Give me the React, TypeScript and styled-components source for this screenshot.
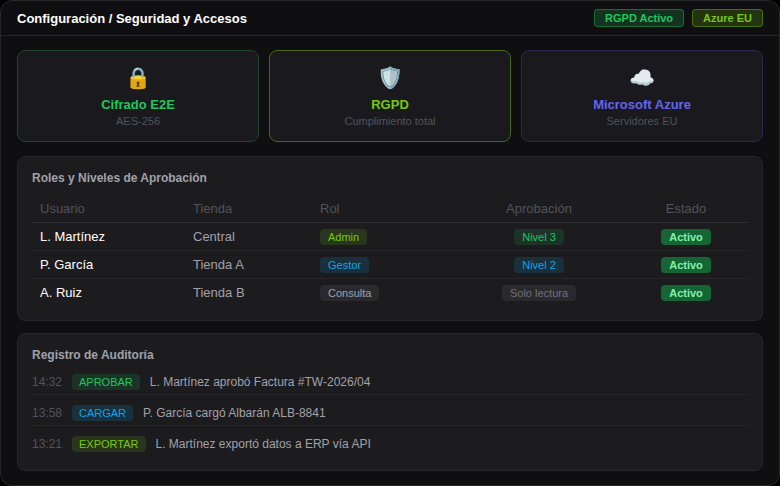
import styled, { createGlobalStyle } from 'styled-components';

const GREEN = '#22c55e';
const LIME = '#76c80e';
const BLUE = '#0ea5e9';
const INDIGO = '#6366f1';

const GlobalStyle = createGlobalStyle`
    html, body {
        margin: 0;
        padding: 0;
        background: #000;
    }
    * {
        box-sizing: border-box;
    }
`;

const Frame = styled.div`
    width: 780px;
    height: 486px;
    background: #0f0f11;
    border: 1px solid #27272a;
    border-radius: 12px;
    overflow: hidden;
    font-family: "Liberation Sans", Arial, sans-serif;
    color: #fff;
`;

const Header = styled.header`
    height: 35px;
    display: flex;
    align-items: center;
    justify-content: space-between;
    padding: 0 16px;
    border-bottom: 1px solid #27272a;
`;

const PageTitle = styled.h1`
    margin: 0;
    font-size: 13px;
    font-weight: 700;
    color: #fff;
`;

const HeaderTags = styled.div`
    display: flex;
    gap: 8px;
`;

const HeaderTag = styled.span<{ $color: string }>`
    height: 18px;
    display: flex;
    align-items: center;
    padding: 0 10px;
    border-radius: 4px;
    font-size: 11px;
    font-weight: 700;
    color: ${p => p.$color};
    background: ${p => p.$color}33;
    border: 1px solid ${p => p.$color}66;
`;

const Content = styled.main`
    display: flex;
    flex-direction: column;
    padding: 14px 16px;
`;

const Cards = styled.section`
    display: grid;
    grid-template-columns: repeat(3, 242px);
    gap: 10px;
    margin-bottom: 14px;
`;

const Card = styled.div<{ $border: string }>`
    height: 92px;
    display: flex;
    flex-direction: column;
    align-items: center;
    background: #1a1a1e;
    border: 1px solid ${p => p.$border};
    border-radius: 8px;
    padding-top: 14px;
`;

const CardIcon = styled.span`
    font-size: 21px;
    line-height: 26px;
    height: 26px;
    margin-bottom: 6px;
    font-family: "Noto Color Emoji", "Liberation Sans", sans-serif;
`;

const CardTitle = styled.div<{ $color: string }>`
    font-size: 13px;
    line-height: 15px;
    font-weight: 700;
    color: ${p => p.$color};
`;

const CardSub = styled.div`
    font-size: 11px;
    line-height: 13px;
    margin-top: 3px;
    color: #52525b;
`;

const Panel = styled.section<{ $height: number; $gap?: number }>`
    height: ${p => p.$height}px;
    margin-bottom: ${p => p.$gap ?? 0}px;
    padding: 14px;
    background: #1c1c1f;
    border: 1px solid #27272a;
    border-radius: 8px;
`;

const PanelTitle = styled.h2`
    margin: 0;
    font-size: 12px;
    line-height: 14px;
    font-weight: 700;
    color: #a1a1aa;
`;

const Table = styled.div`
    margin-top: 10px;
    font-size: 13px;
`;

const Row = styled.div<{ $head?: boolean }>`
    height: 28px;
    display: grid;
    grid-template-columns: 153px 127px 142px 170px 124px;
    align-items: center;
    border-bottom: 1px solid ${p => (p.$head ? '#2e2e33' : '#27272a')};
    &:last-child {
        border-bottom-color: transparent;
    }
`;

const HeadCell = styled.div<{ $center?: boolean }>`
    padding: 0 8px;
    color: #52525b;
    text-align: ${p => (p.$center ? 'center' : 'left')};
`;

const Cell = styled.div<{ $center?: boolean; $strong?: boolean }>`
    padding: 0 8px;
    display: flex;
    justify-content: ${p => (p.$center ? 'center' : 'flex-start')};
    color: ${p => (p.$strong ? '#fff' : '#a1a1aa')};
`;

const Badge = styled.span<{ $color: string; $bg?: string; $bold?: boolean }>`
    height: 16px;
    display: inline-flex;
    align-items: center;
    padding: 0 8px;
    border-radius: 4px;
    font-size: 11px;
    font-weight: ${p => (p.$bold ? 700 : 400)};
    color: ${p => p.$color};
    background: ${p => p.$bg ?? `${p.$color}26`};
`;

const Log = styled.div`
    display: flex;
    flex-direction: column;
    gap: 10px;
    margin-top: 12px;
`;

const LogRow = styled.div`
    display: flex;
    align-items: center;
    padding-bottom: 4px;
    font-size: 12px;
    border-bottom: 1px solid #27272a;
    &:last-child {
        border-bottom: 0;
    }
`;

const LogTime = styled.span`
    width: 40px;
    color: #52525b;
`;

const LogAction = styled(Badge)`
    padding: 0 7px;
    margin-right: 10px;
`;

const LogText = styled.span`
    color: #a1a1aa;
`;

const MUTED_BG = '#2a2a2e';

const users = [
    { name: 'L. Martínez', store: 'Central', role: 'Admin', roleColor: LIME, level: 'Nivel 3', levelColor: GREEN },
    { name: 'P. García', store: 'Tienda A', role: 'Gestor', roleColor: BLUE, level: 'Nivel 2', levelColor: BLUE },
    { name: 'A. Ruiz', store: 'Tienda B', role: 'Consulta', roleColor: '#a1a1aa', roleBg: MUTED_BG, level: 'Solo lectura', levelColor: '#71717a', levelBg: MUTED_BG },
];

const audit = [
    { time: '14:32', action: 'APROBAR', color: GREEN, text: 'L. Martínez aprobó Factura #TW-2026/04' },
    { time: '13:58', action: 'CARGAR', color: BLUE, text: 'P. García cargó Albarán ALB-8841' },
    { time: '13:21', action: 'EXPORTAR', color: LIME, text: 'L. Martínez exportó datos a ERP vía API' },
];

const App = () => {
    return (
        <Frame>
            <GlobalStyle />
            <Header>
                <PageTitle>Configuración / Seguridad y Accesos</PageTitle>
                <HeaderTags>
                    <HeaderTag $color={GREEN}>RGPD Activo</HeaderTag>
                    <HeaderTag $color={LIME}>Azure EU</HeaderTag>
                </HeaderTags>
            </Header>
            <Content>
                <Cards>
                    <Card $border="#22432c">
                        <CardIcon>🔒</CardIcon>
                        <CardTitle $color={GREEN}>Cifrado E2E</CardTitle>
                        <CardSub>AES-256</CardSub>
                    </Card>
                    <Card $border="#466b14">
                        <CardIcon>🛡️</CardIcon>
                        <CardTitle $color={LIME}>RGPD</CardTitle>
                        <CardSub>Cumplimiento total</CardSub>
                    </Card>
                    <Card $border="#2b2a4d">
                        <CardIcon>☁️</CardIcon>
                        <CardTitle $color={INDIGO}>Microsoft Azure</CardTitle>
                        <CardSub>Servidores EU</CardSub>
                    </Card>
                </Cards>
                <Panel $height={165} $gap={12}>
                    <PanelTitle>Roles y Niveles de Aprobación</PanelTitle>
                    <Table>
                        <Row $head>
                            <HeadCell>Usuario</HeadCell>
                            <HeadCell>Tienda</HeadCell>
                            <HeadCell>Rol</HeadCell>
                            <HeadCell $center>Aprobación</HeadCell>
                            <HeadCell $center>Estado</HeadCell>
                        </Row>
                        {users.map(user => (
                            <Row key={user.name}>
                                <Cell $strong>{user.name}</Cell>
                                <Cell>{user.store}</Cell>
                                <Cell><Badge $color={user.roleColor} $bg={user.roleBg}>{user.role}</Badge></Cell>
                                <Cell $center><Badge $color={user.levelColor} $bg={user.levelBg}>{user.level}</Badge></Cell>
                                <Cell $center><Badge $color="#86efac" $bg="#166534" $bold>Activo</Badge></Cell>
                            </Row>
                        ))}
                    </Table>
                </Panel>
                <Panel $height={138}>
                    <PanelTitle>Registro de Auditoría</PanelTitle>
                    <Log>
                        {audit.map(entry => (
                            <LogRow key={entry.time}>
                                <LogTime>{entry.time}</LogTime>
                                <LogAction $color={entry.color}>{entry.action}</LogAction>
                                <LogText>{entry.text}</LogText>
                            </LogRow>
                        ))}
                    </Log>
                </Panel>
            </Content>
        </Frame>
    );
};

export default App;
